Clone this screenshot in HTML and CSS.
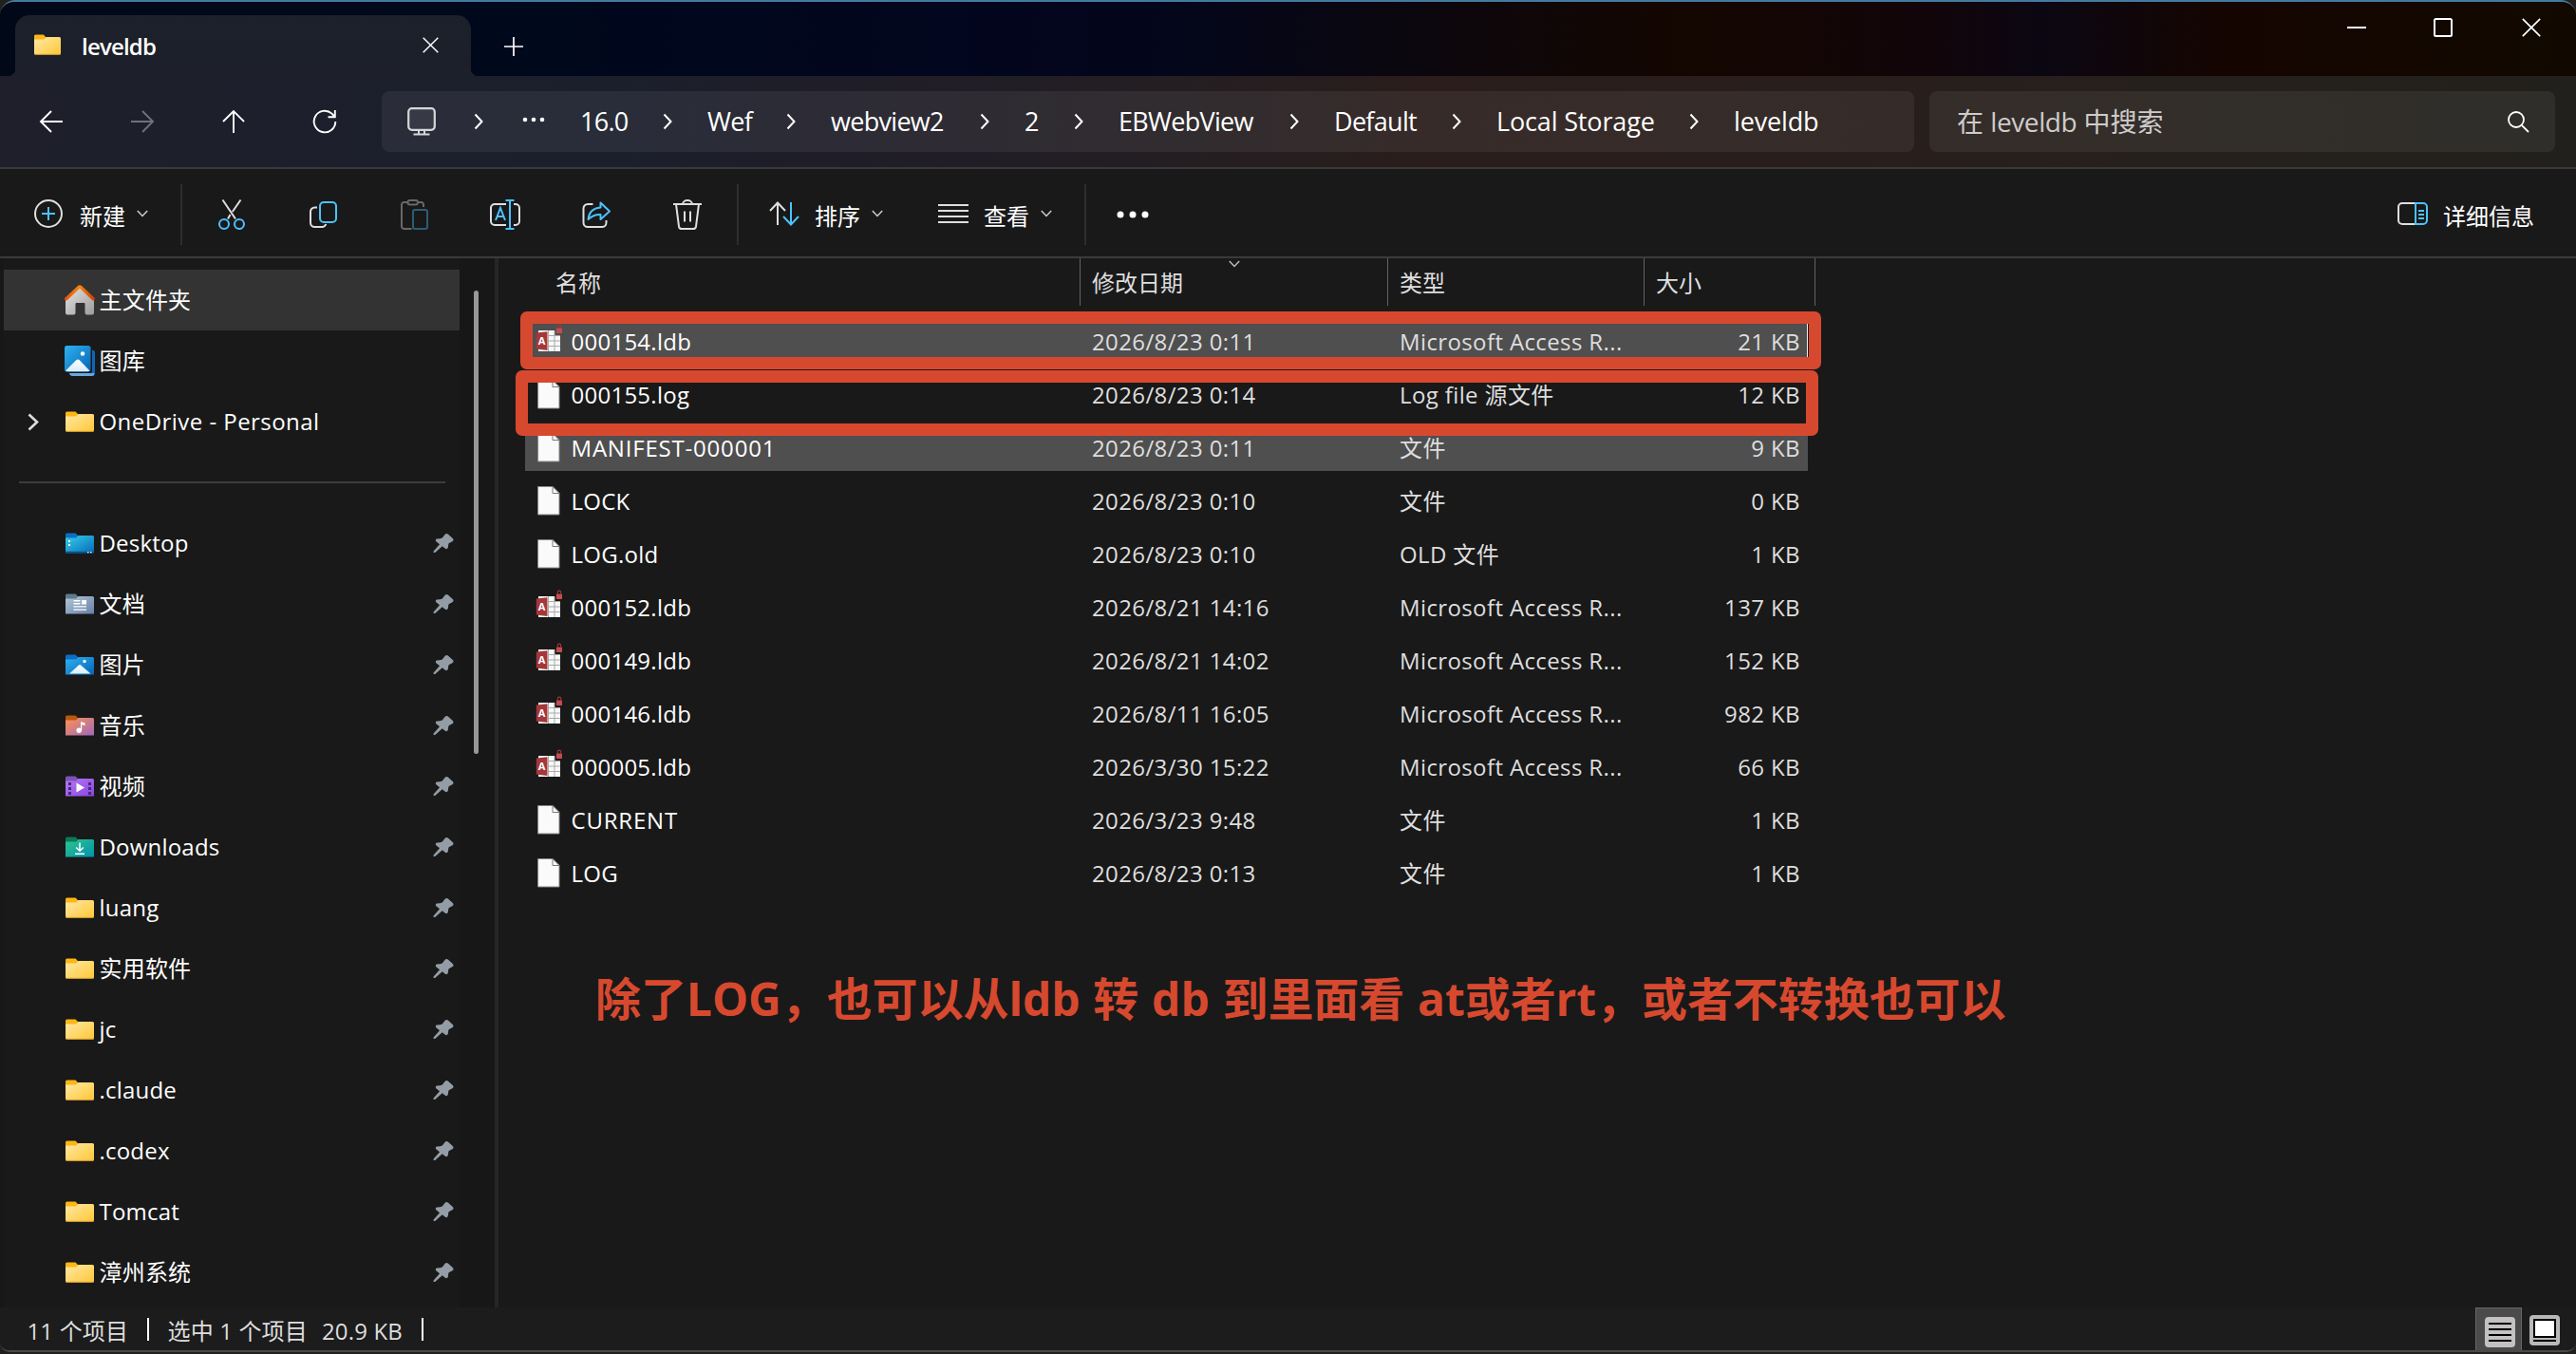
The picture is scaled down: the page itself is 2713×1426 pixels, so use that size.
FILE: index.html
```
<!DOCTYPE html>
<html lang="zh-CN">
<head>
<meta charset="utf-8">
<title>leveldb</title>
<link rel="stylesheet" href="styles.css">
</head>
<body>
<svg class="defs" width="0" height="0" aria-hidden="true">
  <defs>
    <linearGradient id="gFolder" x1="0" y1="0" x2="1" y2="1"><stop offset="0" stop-color="#ffe9a6"/><stop offset="1" stop-color="#ffc736"/></linearGradient>
    <linearGradient id="gDesk" x1="0" y1="0" x2="1" y2="1"><stop offset="0" stop-color="#35d0ea"/><stop offset="1" stop-color="#0869b8"/></linearGradient>
    <linearGradient id="gDoc" x1="0" y1="0" x2="1" y2="1"><stop offset="0" stop-color="#b3c7da"/><stop offset="1" stop-color="#6781a5"/></linearGradient>
    <linearGradient id="gPic" x1="0" y1="0" x2="1" y2="1"><stop offset="0" stop-color="#2fb3f0"/><stop offset="1" stop-color="#0563b6"/></linearGradient>
    <linearGradient id="gMus" x1="0" y1="0" x2="1" y2="1"><stop offset="0" stop-color="#ff9350"/><stop offset="1" stop-color="#a068bb"/></linearGradient>
    <linearGradient id="gVid" x1="0" y1="0" x2="1" y2="1"><stop offset="0" stop-color="#b67af6"/><stop offset="1" stop-color="#8a43e0"/></linearGradient>
    <linearGradient id="gDown" x1="0" y1="0" x2="1" y2="1"><stop offset="0" stop-color="#31c48a"/><stop offset="1" stop-color="#0093b0"/></linearGradient>
    <linearGradient id="gHome" x1="0" y1="0" x2="1" y2="1"><stop offset="0" stop-color="#e4e4e4"/><stop offset="1" stop-color="#9c9c9c"/></linearGradient>
    <linearGradient id="gRoof" x1="0" y1="0" x2="1" y2="0"><stop offset="0" stop-color="#e8590c"/><stop offset=".5" stop-color="#f5860c"/><stop offset="1" stop-color="#cf4304"/></linearGradient>
    <linearGradient id="gSnow" x1="0" y1="0" x2="0" y2="1"><stop offset="0" stop-color="#ffffff"/><stop offset="1" stop-color="#d7ebfb"/></linearGradient>
  </defs>
  <symbol id="folder" viewBox="0 0 32 24">
    <path d="M1 3a1.500 1.500 0 0 1 1.500-1.500h9L14 4v4H1z" fill="#fdb614"/>
    <path d="M1 6.500h11L14.500 4H29.500a1.500 1.500 0 0 1 1.500 1.500V21a1.500 1.500 0 0 1-1.500 1.500h-27A1.500 1.500 0 0 1 1 21z" fill="url(#gFolder)"/>
    <path d="M1.500 22.300h29" stroke="#d9a02c" stroke-width="1"/>
  </symbol>
  <symbol id="desktop" viewBox="0 0 32 24">
    <path d="M1 3a1.500 1.500 0 0 1 1.500-1.500h9L14 4v4H1z" fill="#0a6fc4"/>
    <path d="M1 6.500h11L14.500 4H29.500a1.500 1.500 0 0 1 1.500 1.500V22.500H1z" fill="url(#gDesk)"/>
    <path d="M1 20.800h30v1.700H1z" fill="#0b4d80"/>
    <path d="M4 9h2v2H4zM4 13h2v2H4zM24 21h1.500v1.200H24zM27 21h1.500v1.200H27z" fill="#fff"/>
  </symbol>
  <symbol id="docs" viewBox="0 0 32 24">
    <path d="M1 3a1.500 1.500 0 0 1 1.500-1.500h9L14 4v4H1z" fill="#5d7c8c"/>
    <path d="M1 6.500h11L14.500 4H29.500a1.500 1.500 0 0 1 1.500 1.500V22.500H1z" fill="url(#gDoc)"/>
    <path d="M9.500 8h7v1.500h-7zM9.500 11h7v1.500h-7zM18 8h5v4.500h-5zM9.500 14.200h13.500v1.400H9.500zM9.500 17.400h13.500v1.400H9.500z" fill="#fff"/>
  </symbol>
  <symbol id="pics" viewBox="0 0 32 24">
    <path d="M1 3a1.500 1.500 0 0 1 1.500-1.500h9L14 4v4H1z" fill="#0a6fc4"/>
    <path d="M1 6.500h11L14.500 4H29.500a1.500 1.500 0 0 1 1.500 1.500V22.500H1z" fill="url(#gPic)"/>
    <path d="M5 21.500 15 12.500q1-.8 2 0L27.500 21.500z" fill="url(#gSnow)"/><circle cx="21" cy="8.500" r="1.700" fill="#fff"/>
  </symbol>
  <symbol id="music" viewBox="0 0 32 24">
    <path d="M1 3a1.500 1.500 0 0 1 1.500-1.500h9L14 4v4H1z" fill="#b9570f"/>
    <path d="M1 6.500h11L14.500 4H29.500a1.500 1.500 0 0 1 1.500 1.500V22.500H1z" fill="url(#gMus)"/>
    <circle cx="15.200" cy="17.300" r="2.700" fill="#fff"/><path d="M17 17V8l4.500 1.500v2.800L18.200 11v6z" fill="#fff"/>
  </symbol>
  <symbol id="video" viewBox="0 0 32 24">
    <path d="M1 3a1.500 1.500 0 0 1 1.500-1.500h9L14 4v4H1z" fill="#7d52b8"/>
    <path d="M1 6.500h11L14.500 4H29.500a1.500 1.500 0 0 1 1.500 1.500V22.500H1z" fill="url(#gVid)"/>
    <path d="M4 8h3v3H4zM4 13h3v3H4zM4 18h3v3H4zM25 8h3v3h-3zM25 13h3v3h-3zM25 18h3v3h-3z" fill="#432a78"/>
    <path d="M12.500 8.500 21 13.500l-8.500 5z" fill="#fff"/>
  </symbol>
  <symbol id="down" viewBox="0 0 32 24">
    <path d="M1 3a1.500 1.500 0 0 1 1.500-1.500h9L14 4v4H1z" fill="#0a7a58"/>
    <path d="M1 6.500h11L14.500 4H29.500a1.500 1.500 0 0 1 1.500 1.500V22.500H1z" fill="url(#gDown)"/>
    <path d="M16 7.500v8.500M12.200 12.500l3.800 3.800 3.800-3.800M11 19.300h10" fill="none" stroke="#fff" stroke-width="1.500"/>
  </symbol>
  <symbol id="home" viewBox="0 0 32 32">
    <path d="M1 15 16 2l15 13v14.500a2 2 0 0 1-2 2h-5.500a2 2 0 0 1-2-2V20q0-1-1-1h-8q-1 0-1 1v9.500a2 2 0 0 1-2 2H3a2 2 0 0 1-2-2z" fill="url(#gHome)"/>
    <path d="M1.800 14.800 14.800 2.600q1.200-1 2.400 0L30.200 14.800" fill="none" stroke="url(#gRoof)" stroke-width="3.400" stroke-linecap="round"/>
  </symbol>
  <symbol id="gallery" viewBox="0 0 32 32">
    <path d="M29 4.500q3 .5 3 3V29q0 3-3 3H9q-3.500 0-4-3h22q2 0 2-2z" fill="#1066b8"/><path d="M5 29h25.500q1 0 1 .5-.5 2.500-3 2.500H9q-3.500 0-4-3z" fill="#69a9e0"/>
    <rect x="0" y="0" width="27.500" height="27.500" rx="2.500" fill="url(#gPic)"/>
    <path d="M1 26.500 12.500 15q1.500-1.200 3 0L26.500 26.500q-1 .7-2 .7H3q-1.300 0-2-.7z" fill="url(#gSnow)"/><circle cx="19" cy="8.500" r="2.200" fill="#fff"/>
  </symbol>
  <symbol id="pin" viewBox="0 0 22 22">
    <path d="M12.500 2Q14 .2 15.800 1.500l5 4.600q1.600 2-.4 3.200L16.600 11.200q-.6 1.500-.8 4.600-1 2.200-2.900.9L9.800 14.200 2.200 21H.6v-1.600L7 12.300 3.300 9.200Q2 7.500 4 6.600q3.800-.3 5.800-1.200z" fill="#949da5"/>
  </symbol>
  <symbol id="file" viewBox="0 0 24 32">
    <path d="M.6 1.500H16l7 7V31H.6z" fill="#fafafa" stroke="#8a8a8a" stroke-width="1"/><path d="M16 1.500v7h7z" fill="#fff" stroke="#777" stroke-width="1"/>
  </symbol>
  <symbol id="access" viewBox="0 0 30 32">
    <path d="M4 7h17v5.500h6V29H4z" fill="#f8f8f8"/>
    <path d="M14 12.500h13M14 18h13M14 23.500h13M14.500 7v22M21 7v22" stroke="#a9a9a9" stroke-width="1"/>
    <path d="M1.800 9.500 13.500 8.300v19.800L1.800 26.500z" fill="#a4373a"/>
    <text x="7.500" y="22" text-anchor="middle" class="access-a">A</text>
    <rect x="23" y="4.500" width="6" height="5.500" rx=".6" fill="#c74a50"/><path d="M24.300 4.500V2.800a1.700 1.700 0 0 1 3.400 0v1.700" fill="none" stroke="#a4373a" stroke-width="1.100"/>
  </symbol>
  <symbol id="chev" viewBox="0 0 10 18"><path d="M1.500 1.500 8.500 9l-7 7.500" fill="none" stroke="currentColor" stroke-width="2"/></symbol>
  <symbol id="caret" viewBox="0 0 12 8"><path d="M.8 1 6 6.500 11.200 1" fill="none" stroke="currentColor" stroke-width="1.500"/></symbol>
  <symbol id="cross" viewBox="0 0 20 20"><path d="M.8.8l18.400 18.400M19.200.8.8 19.200" stroke="currentColor" stroke-width="1.700"/></symbol>
</svg>

<div class="window">
  <header class="titlebar">
    <div class="tab">
      <svg class="tab-icon" viewBox="1 1 30 22" preserveAspectRatio="none"><use href="#folder" width="32" height="24"/></svg>
      <span class="tab-title">leveldb</span>
      <svg class="tab-close" width="17" height="17"><use href="#cross"/></svg>
    </div>
    <svg class="tab-add" width="20" height="20" viewBox="0 0 20 20"><path d="M10 0v20M0 10h20" stroke="#fff" stroke-width="1.700"/></svg>
    <div class="win-buttons">
      <svg width="20" height="20" viewBox="0 0 20 20"><path d="M0 10h20" stroke="#fff" stroke-width="2"/></svg>
      <svg width="20" height="20" viewBox="0 0 20 20"><rect x="1" y="1" width="18" height="18" rx="1.500" fill="none" stroke="#fff" stroke-width="2"/></svg>
      <svg width="20" height="20"><use href="#cross"/></svg>
    </div>
  </header>

  <nav class="navbar">
    <div class="nav-buttons">
      <svg width="26" height="26" viewBox="0 0 26 26"><path d="M25 13H2M13 2 2 13l11 11" class="ln"/></svg>
      <svg class="dim" width="26" height="26" viewBox="0 0 26 26"><path d="M1 13h23M13 2l11 11-11 11" class="ln"/></svg>
      <svg width="26" height="26" viewBox="0 0 26 26"><path d="M13 25V2M2 13 13 2l11 11" class="ln"/></svg>
      <svg width="26" height="26" viewBox="0 0 26 26"><path d="M24.300 13A11.300 11.300 0 1 1 20.500 4.600L23.500 8M23.800 1v7.300h-7.300" class="ln"/></svg>
    </div>
    <div class="address">
      <svg class="pc" width="30" height="30" viewBox="0 0 30 30"><rect x="1.200" y="1.200" width="27.600" height="22.600" rx="3.500" fill="#ffffff10" stroke="#d6d6da" stroke-width="2.200"/><path d="M12 24v4M18 24v4M6.500 28.600h17" stroke="#d6d6da" stroke-width="2"/></svg>
      <svg class="chev" width="10" height="18"><use href="#chev"/></svg>
      <svg class="ellipsis" width="24" height="6" viewBox="0 0 24 6"><circle cx="3" cy="3" r="2.300"/><circle cx="12" cy="3" r="2.300"/><circle cx="21" cy="3" r="2.300"/></svg>
      <div class="crumbs">
        <span class="crumb">16.0<svg width="10" height="18"><use href="#chev"/></svg></span>
        <span class="crumb">Wef<svg width="10" height="18"><use href="#chev"/></svg></span>
        <span class="crumb">webview2<svg width="10" height="18"><use href="#chev"/></svg></span>
        <span class="crumb">2<svg width="10" height="18"><use href="#chev"/></svg></span>
        <span class="crumb">EBWebView<svg width="10" height="18"><use href="#chev"/></svg></span>
        <span class="crumb">Default<svg width="10" height="18"><use href="#chev"/></svg></span>
        <span class="crumb wide">Local Storage<svg width="10" height="18"><use href="#chev"/></svg></span>
        <span class="crumb wide">leveldb</span>
      </div>
    </div>
    <div class="search">
      <span>在 <i>leveldb</i> 中搜索</span>
      <svg width="23" height="23" viewBox="0 0 23 23"><circle cx="9" cy="9" r="8" fill="none" stroke="#fff" stroke-width="1.800"/><path d="M14.800 14.800 22 22" stroke="#fff" stroke-width="1.800"/></svg>
    </div>
  </nav>

  <div class="toolbar">
    <div class="tool new">
      <svg width="30" height="30" viewBox="0 0 30 30"><circle cx="15" cy="15" r="14" class="lw"/><path d="M15 8v14M8 15h14" class="lb"/></svg>
      <span>新建</span>
      <svg class="caret" width="12" height="8"><use href="#caret"/></svg>
    </div>
    <i class="rule"></i>
    <div class="tool-icons">
      <svg width="32" height="32" viewBox="0 0 32 32"><path d="M6.500.5 20 20.500M25.500.5 16.800 13M14.500 16 12 20.500" class="lw"/><circle cx="8" cy="26" r="5" class="lb"/><circle cx="24" cy="26" r="5" class="lb"/></svg>
      <svg width="32" height="32" viewBox="0 0 32 32"><path d="M10 8.500H7.500a4.500 4.500 0 0 0-4.500 4.500v11.500A4.500 4.500 0 0 0 7.500 29h7.500a4.500 4.500 0 0 0 4.300-3" class="lw"/><rect x="13" y="3" width="17" height="21" rx="4" class="lb"/></svg>
      <svg class="faded" width="32" height="32" viewBox="0 0 32 32"><path d="M9 3H5.500a2.500 2.500 0 0 0-2.500 2.500v23A2.500 2.500 0 0 0 5.500 31h8M21 3h2.500A2.500 2.500 0 0 1 26 5.500V8" class="lw"/><rect x="9.500" y="1" width="10.500" height="4.500" rx="2.200" class="lw"/><rect x="15" y="11" width="15" height="20" rx="2" class="lb"/></svg>
      <svg width="32" height="32" viewBox="0 0 32 32"><path d="M17 5H5a4 4 0 0 0-4 4v14a4 4 0 0 0 4 4h12M25 5h2a4 4 0 0 1 4 4v14a4 4 0 0 1-4 4h-2" class="lw"/><path d="M21 1v30M16.500 1h9M16.500 31h9M6 22l5-13 5 13M7.500 18h7" class="lb"/></svg>
      <svg width="32" height="32" viewBox="0 0 32 32"><path d="M12.500 5H7a4.500 4.500 0 0 0-4.500 4.500v15A4.500 4.500 0 0 0 7 29h15a4.500 4.500 0 0 0 4.500-4.500V22" class="lw"/><path d="M20.500 3.500 30 12.500l-9.500 8.500v-5q-7-.5-13 5Q8.500 9.500 20.500 8.500z" class="lb" stroke-linejoin="round"/></svg>
      <svg width="32" height="32" viewBox="0 0 32 32"><path d="M1 5h30M11 5a5 4 0 0 1 10 0M4 5l3 23.500a3 3 0 0 0 3 2.500h12a3 3 0 0 0 3-2.500L28 5M13 12.500v11M19 12.500v11" class="lw"/></svg>
    </div>
    <i class="rule"></i>
    <div class="tool sort">
      <svg width="32" height="26" viewBox="0 0 32 26"><path d="M9 25V2M1 10l8-8.500 8 8.500" class="lw"/><path d="M23 1v23M15 16l8 8.500 8-8.500" class="lb"/></svg>
      <span>排序</span>
      <svg class="caret" width="12" height="8"><use href="#caret"/></svg>
    </div>
    <div class="tool view">
      <svg width="32" height="22" viewBox="0 0 32 22"><path d="M0 2h32M0 8h32M0 14h32M0 20h32" class="lw"/></svg>
      <span>查看</span>
      <svg class="caret" width="12" height="8"><use href="#caret"/></svg>
    </div>
    <i class="rule"></i>
    <svg class="more" width="34" height="8" viewBox="0 0 34 8"><circle cx="4" cy="4" r="3.500"/><circle cx="17" cy="4" r="3.500"/><circle cx="30" cy="4" r="3.500"/></svg>
    <div class="tool details">
      <svg width="32" height="24" viewBox="0 0 32 24"><path d="M18 1H5a4 4 0 0 0-4 4v14a4 4 0 0 0 4 4h13" class="lw"/><path d="M19 1h8a4 4 0 0 1 4 4v14a4 4 0 0 1-4 4h-8zM22 9h6M22 13h6M22 17h6" class="lb"/></svg>
      <span>详细信息</span>
    </div>
  </div>

  <main class="content">
    <aside class="sidebar">
      <ul class="tree">
        <li class="active"><svg class="ico sq"><use href="#home"/></svg><span>主文件夹</span></li>
        <li><svg class="ico sq"><use href="#gallery"/></svg><span>图库</span></li>
        <li><svg class="expand" width="12" height="19" viewBox="0 0 12 19"><path d="M1.500 1.500 10 9.500l-8.500 8" fill="none" stroke="#ddd" stroke-width="2.600"/></svg><svg class="ico"><use href="#folder"/></svg><span class="onedrive">OneDrive - Personal</span></li>
        <li class="sep"></li>
        <li><svg class="ico"><use href="#desktop"/></svg><span>Desktop</span><svg class="pin"><use href="#pin"/></svg></li>
        <li><svg class="ico"><use href="#docs"/></svg><span>文档</span><svg class="pin"><use href="#pin"/></svg></li>
        <li><svg class="ico"><use href="#pics"/></svg><span>图片</span><svg class="pin"><use href="#pin"/></svg></li>
        <li><svg class="ico"><use href="#music"/></svg><span>音乐</span><svg class="pin"><use href="#pin"/></svg></li>
        <li><svg class="ico"><use href="#video"/></svg><span>视频</span><svg class="pin"><use href="#pin"/></svg></li>
        <li><svg class="ico"><use href="#down"/></svg><span>Downloads</span><svg class="pin"><use href="#pin"/></svg></li>
        <li><svg class="ico"><use href="#folder"/></svg><span>luang</span><svg class="pin"><use href="#pin"/></svg></li>
        <li><svg class="ico"><use href="#folder"/></svg><span>实用软件</span><svg class="pin"><use href="#pin"/></svg></li>
        <li><svg class="ico"><use href="#folder"/></svg><span>jc</span><svg class="pin"><use href="#pin"/></svg></li>
        <li><svg class="ico"><use href="#folder"/></svg><span>.claude</span><svg class="pin"><use href="#pin"/></svg></li>
        <li><svg class="ico"><use href="#folder"/></svg><span>.codex</span><svg class="pin"><use href="#pin"/></svg></li>
        <li><svg class="ico"><use href="#folder"/></svg><span>Tomcat</span><svg class="pin"><use href="#pin"/></svg></li>
        <li><svg class="ico"><use href="#folder"/></svg><span>漳州系统</span><svg class="pin"><use href="#pin"/></svg></li>
      </ul>
      <div class="scroll"><i></i></div>
    </aside>

    <section class="files">
      <div class="head">
        <span class="h-name">名称</span><span>修改日期<svg class="sorted" width="14" height="8"><use href="#caret"/></svg></span><span>类型</span><span>大小</span>
      </div>
      <div class="rows">
        <div class="row sel focus"><svg class="fi"><use href="#access"/></svg><b>000154.ldb</b><span>2026/8/23 0:11</span><span>Microsoft Access R...</span><span class="size">21 KB</span></div>
        <div class="row"><svg class="fi doc"><use href="#file"/></svg><b>000155.log</b><span>2026/8/23 0:14</span><span>Log file 源文件</span><span class="size">12 KB</span></div>
        <div class="row sel"><svg class="fi doc"><use href="#file"/></svg><b class="caps">MANIFEST-000001</b><span>2026/8/23 0:11</span><span>文件</span><span class="size">9 KB</span></div>
        <div class="row"><svg class="fi doc"><use href="#file"/></svg><b>LOCK</b><span>2026/8/23 0:10</span><span>文件</span><span class="size">0 KB</span></div>
        <div class="row"><svg class="fi doc"><use href="#file"/></svg><b>LOG.old</b><span>2026/8/23 0:10</span><span>OLD 文件</span><span class="size">1 KB</span></div>
        <div class="row"><svg class="fi"><use href="#access"/></svg><b>000152.ldb</b><span>2026/8/21 14:16</span><span>Microsoft Access R...</span><span class="size">137 KB</span></div>
        <div class="row"><svg class="fi"><use href="#access"/></svg><b>000149.ldb</b><span>2026/8/21 14:02</span><span>Microsoft Access R...</span><span class="size">152 KB</span></div>
        <div class="row"><svg class="fi"><use href="#access"/></svg><b>000146.ldb</b><span>2026/8/11 16:05</span><span>Microsoft Access R...</span><span class="size">982 KB</span></div>
        <div class="row"><svg class="fi"><use href="#access"/></svg><b>000005.ldb</b><span>2026/3/30 15:22</span><span>Microsoft Access R...</span><span class="size">66 KB</span></div>
        <div class="row"><svg class="fi doc"><use href="#file"/></svg><b class="caps">CURRENT</b><span>2026/3/23 9:48</span><span>文件</span><span class="size">1 KB</span></div>
        <div class="row"><svg class="fi doc"><use href="#file"/></svg><b>LOG</b><span>2026/8/23 0:13</span><span>文件</span><span class="size">1 KB</span></div>
      </div>
      <div class="mark mark-ldb"></div>
      <div class="mark mark-log"></div>
      <p class="note">除了LOG，也可以从ldb 转 db 到里面看 at或者rt，或者不转换也可以</p>
    </section>
  </main>

  <footer class="status">
    <span class="count">11 个项目</span><i></i><span class="picked">选中 1 个项目</span><span class="bytes">20.9 KB</span><i></i>
    <div class="modes">
      <div class="mode on"><svg width="32" height="32" viewBox="0 0 32 32"><rect width="32" height="32" rx="4" fill="#c3c1c1"/><path d="M4 7h24M4 13h24M4 19h24M4 25h24" stroke="#000" stroke-width="2"/></svg></div>
      <div class="mode"><svg width="32" height="32" viewBox="0 0 32 32"><rect width="32" height="32" rx="4" fill="#b9b9b9"/><rect x="5" y="5" width="22" height="18" fill="#fff" stroke="#000" stroke-width="2"/><path d="M4 27h24" stroke="#000" stroke-width="2"/></svg></div>
    </div>
  </footer>
</div>
</body>
</html>
```
FILE: styles.css
```
* { box-sizing: border-box; }
body {
  margin: 0;
  width: 2713px;
  height: 1426px;
  overflow: hidden;
  background: #231f1d;
  color: #fff;
  font: 24px/32px "Open Sans", "Noto Sans CJK SC", sans-serif;
}
svg { display: block; flex: none; overflow: visible; }
.defs { position: absolute; }
i { font-style: normal; }
.window {
  display: flex;
  flex-direction: column;
  height: 1424px;
  border-top: 2px solid #437b9e;
  border-bottom: 2px solid #4a4a4a;
  border-radius: 16px 16px 10px 10px;
  overflow: hidden;
  background: #191919;
}

/* title bar */
.titlebar {
  display: flex;
  height: 78px;
  padding-left: 16px;
  background: linear-gradient(90deg, #010918 0, #00081c 560px, #02061e 1000px, #04061a 1250px, #0a0710 1450px, #140600 1780px, #12050a 2030px, #0b0712 2150px, #150500 2350px, #110900 2713px);
}
.tab {
  position: relative;
  display: flex;
  align-items: center;
  width: 480px;
  margin-top: 14px;
  padding: 0 34px 0 20px;
  border-radius: 15px 15px 0 0;
  background: linear-gradient(#1b212a, #1d1f2b);
}
.tab::before, .tab::after {
  content: "";
  position: absolute;
  bottom: 0;
  width: 8px;
  height: 8px;
}
.tab::before { left: -8px; background: radial-gradient(circle at 0 0, transparent 8px, #1d1f2b 8.500px); }
.tab::after { right: -8px; background: radial-gradient(circle at 100% 0, transparent 8px, #1d1f2b 8.500px); }
.tab-icon { width: 28px; height: 22px; margin-bottom: 2px; }
.tab-title { flex: 1; margin-left: 22px; padding-top: 1px; font-weight: 600; letter-spacing: -0.800px; }
.tab-close { margin-bottom: 2px; }
.tab-add { margin: 37px 0 0 35px; }
.win-buttons { display: flex; gap: 71px; margin: 17px 37px 0 auto; }
.win-buttons svg:last-child { margin-left: 2px; }

/* navigation */
.navbar {
  display: flex;
  align-items: center;
  height: 98px;
  padding-right: 22px;
  border-bottom: 2px solid #3a3a3a;
  background: linear-gradient(90deg, #1e1f2b 0, #1b1f2c 640px, #1f1d28 900px, #241e22 1250px, #2a1d1b 1500px, #281e1b 2000px, #26201c 2250px, #22201c 2713px);
  font-size: 27px;
}
.nav-buttons { display: flex; gap: 70px; width: 402px; padding-left: 41px; }
.ln { fill: none; stroke: #fff; stroke-width: 1.900; }
.dim { opacity: 0.370; }
.address, .search {
  display: flex;
  align-items: center;
  height: 64px;
  border-radius: 8px;
  background: rgba(255, 255, 255, 0.062);
}
.address { width: 1614px; padding-left: 27px; letter-spacing: -0.700px; }
.address .chev { margin-left: 40px; }
.ellipsis { margin: 0 0 4px 41px; fill: #fff; }
.crumbs { display: grid; grid-template-columns: 134px 130px 204px 99px 227px 171px 250px auto; margin-left: 37px; }
.crumb { display: flex; align-items: center; justify-content: space-between; padding-right: 37px; white-space: nowrap; }
.crumb.wide { letter-spacing: -0.150px; }
.search { flex: 1; justify-content: space-between; margin-left: 16px; padding: 0 27px 0 29px; color: #cfcbca; font-size: 28px; }
.search i { font-size: 28px; letter-spacing: -0.400px; }

/* command bar */
.toolbar {
  display: flex;
  align-items: center;
  height: 94px;
  padding: 2px 0 0 36px;
  border-bottom: 2px solid #3a3a3a;
  background: #191919;
}
.lw { fill: none; stroke: #dedede; stroke-width: 2; }
.lb { fill: none; stroke: #4cc2ff; stroke-width: 2; }
.faded { opacity: 0.400; }
.rule { width: 2px; height: 64px; background: #2e2e2e; margin-top: 2px; }
.tool { display: flex; align-items: center; }
.tool span { margin: 6px 0 0 18px; }
.caret { margin-left: 12px; color: #ccc; }
.new { width: 154px; }
.tool-icons { display: flex; gap: 64px; margin-left: 36px; padding-top: 1px; }
.tool-icons + .rule { margin-left: 36px; }
.sort { margin-left: 32px; }
.sort span, .view span { margin-left: 16px; }
.view { margin-left: 58px; width: 154px; }
.more { margin: 2px 0 0 32px; fill: #fff; }
.details { margin: 0 44px 0 auto; }
.details span { margin-left: 16px; }

/* body */
.content { display: flex; flex: 1; min-height: 0; }
.sidebar { display: flex; width: 525px; padding-left: 4px; border-right: 4px solid #262626; background: #171717; }
.tree { width: 480px; margin: 0; padding: 12px 0 0; list-style: none; background: #191919; }
.tree li { display: flex; align-items: center; height: 64px; padding: 0 6px 0 64px; letter-spacing: 0.200px; }
.tree .active { background: #333; }
.ico { width: 32px; height: 24px; }
.ico.sq { height: 32px; }
.tree span { flex: 1; margin-left: 4.500px; }
.tree .onedrive { letter-spacing: 0.450px; }
.tree .expand { margin: 0 27px 0 -39px; }
.pin { width: 22px; height: 22px; }
.tree .sep { padding: 0 15px 0 16px; }
.sep::after { content: ""; flex: 1; height: 2px; background: #3c3c3c; }
.scroll { padding: 34px 0 0 15px; }
.scroll i { display: block; width: 5px; height: 488px; border-radius: 3px; background: #989898; }

.files { position: relative; flex: 1; background: #191919; }
.head { display: grid; grid-template-columns: 613px 324px 270px 180px; height: 50px; color: #dedede; }
.head span { position: relative; padding: 10px 0 0 12px; border-right: 1px solid #636363; }
.head .h-name { padding-left: 60px; }
.sorted { position: absolute; left: 155px; top: 2px; color: #bbb; }
.rows { width: 1351px; margin: 10px 0 0 28px; }
.row {
  display: grid;
  grid-template-columns: 48.500px 548.500px 324px 270px 152px;
  align-items: center;
  height: 56px;
  color: #dedede;
  background-clip: content-box;
  padding: 4px 0;
}
.row.sel { background-color: #4f4f4f; border-radius: 4px; }
.focus { box-shadow: inset -1px 0 0 #eee; }
.row b { color: #fff; font-weight: 400; letter-spacing: 0.250px; }
.row .caps { letter-spacing: 0.800px; }
.row span { letter-spacing: 0.380px; white-space: nowrap; }
.row .size { text-align: right; }
.fi { width: 30px; height: 32px; margin: 0 0 7px 10px; }
.fi.doc { width: 24px; margin: 0 0 2px 13px; }
.access-a { font: bold 11px "Open Sans", sans-serif; fill: #fff; }

/* red annotations drawn over the list */
.mark { position: absolute; border: 13px solid #d7492f; border-radius: 7px; }
.mark-ldb { left: 23px; top: 56px; width: 1370px; height: 61px; }
.mark-log { left: 17.500px; top: 118px; width: 1372px; height: 69px; }
.note {
  position: absolute;
  left: 102px;
  top: 746px;
  margin: 0;
  color: #d7492f;
  font: 700 48px/68px "Open Sans", "Noto Sans CJK SC", sans-serif;
  letter-spacing: -0.070px;
  word-spacing: 1.400px;
  white-space: nowrap;
}

/* status bar */
.status { display: flex; align-items: center; height: 45px; padding: 5px 0 0 28.500px; background: #1c1c1c; color: #dedede; letter-spacing: 0.150px; }
.status > i { width: 2px; height: 24px; background: #fff; margin-bottom: 5px; }
.count { width: 126.500px; }
.picked { width: 162.500px; margin-left: 19.500px; }
.bytes { width: 105px; }
.modes { display: flex; align-self: stretch; margin: -5px 8px 0 auto; }
.mode { width: 49px; padding: 8px 0 0 8px; }
.mode.on { padding: 9px 0 0 9px; background: #4b4b4b; border: 1px solid #666; border-bottom: 0; }
```
